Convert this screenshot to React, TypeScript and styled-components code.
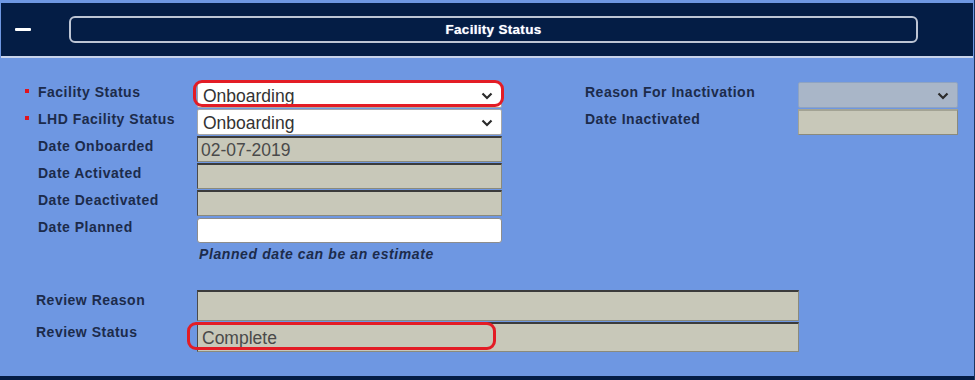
import React from 'react'
import styled, { createGlobalStyle } from 'styled-components'

const GlobalStyle = createGlobalStyle`
  html, body {
    margin: 0;
    padding: 0;
    background: #6e97e2;
  }
  body {
    font-family: 'Liberation Sans', Arial, sans-serif;
  }
`

const Chevron = () => (
  <svg width="12" height="8" viewBox="0 0 12 8">
    <polyline points="1.5,1.5 6,6 10.5,1.5" fill="none" stroke="#2b2b2b" strokeWidth="2.2" />
  </svg>
)

export default function App() {
  return (
    <Page>
      <GlobalStyle />
      <Header>
        <Collapse />
        <TitleBox>Facility Status</TitleBox>
      </Header>
      <Body>
        <FormGrid>
          <Label required>Facility Status</Label>
          <FieldWrap>
            <Select>
              <span>Onboarding</span>
              <Chevron />
            </Select>
            <Highlight $left={-4} $top={-2} $width={311} $height={27} />
          </FieldWrap>
          <span />
          <Label $indent={0}>Reason For Inactivation</Label>
          <Select $disabled>
            <span />
            <Chevron />
          </Select>

          <Label required>LHD Facility Status</Label>
          <Select>
            <span>Onboarding</span>
            <Chevron />
          </Select>
          <span />
          <Label $indent={0}>Date Inactivated</Label>
          <ReadOnly $soft />

          <Label>Date Onboarded</Label>
          <ReadOnly>02-07-2019</ReadOnly>
          <span />
          <span />
          <span />

          <Label>Date Activated</Label>
          <ReadOnly />
          <span />
          <span />
          <span />

          <Label>Date Deactivated</Label>
          <ReadOnly />
          <span />
          <span />
          <span />

          <Label>Date Planned</Label>
          <TextInput />
          <span />
          <span />
          <span />

          <span />
          <Hint>Planned date can be an estimate</Hint>
        </FormGrid>

        <ReviewGrid>
          <Label $indent={16}>Review Reason</Label>
          <ReadOnly $tall />
          <Label $indent={16}>Review Status</Label>
          <FieldWrap>
            <ReadOnly $tall>Complete</ReadOnly>
            <Highlight $left={-10} $top={0} $width={309} $height={28} />
          </FieldWrap>
        </ReviewGrid>
      </Body>
      <Footer />
    </Page>
  )
}

const Label = ({ required, children, $indent }: { required?: boolean; children: React.ReactNode; $indent?: number }) => (
  <LabelText $indent={$indent ?? 18}>
    {required && <Bullet />}
    {children}
  </LabelText>
)

const Page = styled.div`
  width: 975px;
  height: 380px;
  padding-top: 3px;
  box-sizing: border-box;
  display: flex;
  flex-direction: column;
  background: #6e97e2;
  border-right: 1px solid #1d3560;
`

const Header = styled.div`
  height: 53px;
  margin-left: 1px;
  margin-right: 1px;
  background: #041d45;
  border-bottom: 2px solid #c8d4ec;
  display: flex;
  align-items: center;
  padding-left: 14px;
`

const Collapse = styled.span`
  display: block;
  width: 16px;
  height: 3px;
  background: #ffffff;
  border-radius: 1px;
  margin-right: 38px;
`

const TitleBox = styled.div`
  width: 845px;
  height: 23px;
  border: 2px solid #bdc5d4;
  border-radius: 6px;
  color: #ffffff;
  font-weight: bold;
  font-size: 13.5px;
  letter-spacing: 0.3px;
  display: flex;
  align-items: center;
  justify-content: center;
  text-shadow: 0 0 1px #9fb3d8;
`

const Body = styled.div`
  flex: 1;
  padding-top: 24px;
  padding-left: 20px;
`

const FormGrid = styled.div`
  display: grid;
  grid-template-columns: 177px 305px 83px 213px 160px;
  grid-auto-rows: 26px;
  row-gap: 1px;
`

const ReviewGrid = styled.div`
  display: grid;
  grid-template-columns: 177px 602px;
  grid-template-rows: 31px 30px;
  row-gap: 1px;
  margin-top: 20px;
`

const LabelText = styled.div<{ $indent: number }>`
  position: relative;
  padding-left: ${(p) => p.$indent}px;
  padding-top: 3px;
  line-height: 14px;
  font-size: 14px;
  letter-spacing: 0.5px;
  font-weight: bold;
  color: #1c2b4b;
  white-space: nowrap;
`

const Bullet = styled.span`
  position: absolute;
  left: 5px;
  top: 7px;
  width: 4px;
  height: 4px;
  background: #e0141e;
`

const FieldWrap = styled.div`
  position: relative;
  display: flex;
  flex-direction: column;
`

const Highlight = styled.div<{ $left: number; $top: number; $width: number; $height: number }>`
  position: absolute;
  left: ${(p) => p.$left}px;
  top: ${(p) => p.$top}px;
  width: ${(p) => p.$width}px;
  height: ${(p) => p.$height}px;
  box-sizing: border-box;
  border: 3px solid #e31c25;
  border-radius: 9px;
  pointer-events: none;
`

const Select = styled.div<{ $disabled?: boolean }>`
  flex: 1;
  height: 100%;
  box-sizing: border-box;
  display: flex;
  align-items: center;
  justify-content: space-between;
  padding: 2px 8px 0 5px;
  background: ${(p) => (p.$disabled ? '#a9b6c8' : '#ffffff')};
  border: 1px solid ${(p) => (p.$disabled ? '#8ea3c2' : '#a7a7a7')};
  border-radius: 2px;
  color: #333333;
  font-size: 17.5px;
`

const ReadOnly = styled.div<{ $soft?: boolean; $tall?: boolean }>`
  flex: 1;
  height: 100%;
  box-sizing: border-box;
  display: flex;
  align-items: center;
  padding: ${(p) => (p.$tall ? '1px 0 0 4px' : '1px 0 0 3px')};
  background: #c8c8b9;
  border-top: 2px solid ${(p) => (p.$soft ? '#a3a394' : '#3b3b3b')};
  border-left: 1px solid ${(p) => (p.$soft ? '#a3a394' : '#4a4a4a')};
  border-right: 1px solid #8a8a7c;
  border-bottom: 1px solid #8a8a7c;
  color: #4a4a4a;
  font-size: 17.5px;
`

const TextInput = styled.div`
  box-sizing: border-box;
  margin-top: 1px;
  background: #ffffff;
  border: 1px solid #8d8d8d;
  border-radius: 3px;
`

const Hint = styled.div`
  padding-left: 2px;
  padding-top: 2px;
  font-size: 14px;
  letter-spacing: 0.6px;
  font-style: italic;
  font-weight: bold;
  color: #1c2b4b;
  white-space: nowrap;
`

const Footer = styled.div`
  height: 4px;
  background: #041d45;
`
